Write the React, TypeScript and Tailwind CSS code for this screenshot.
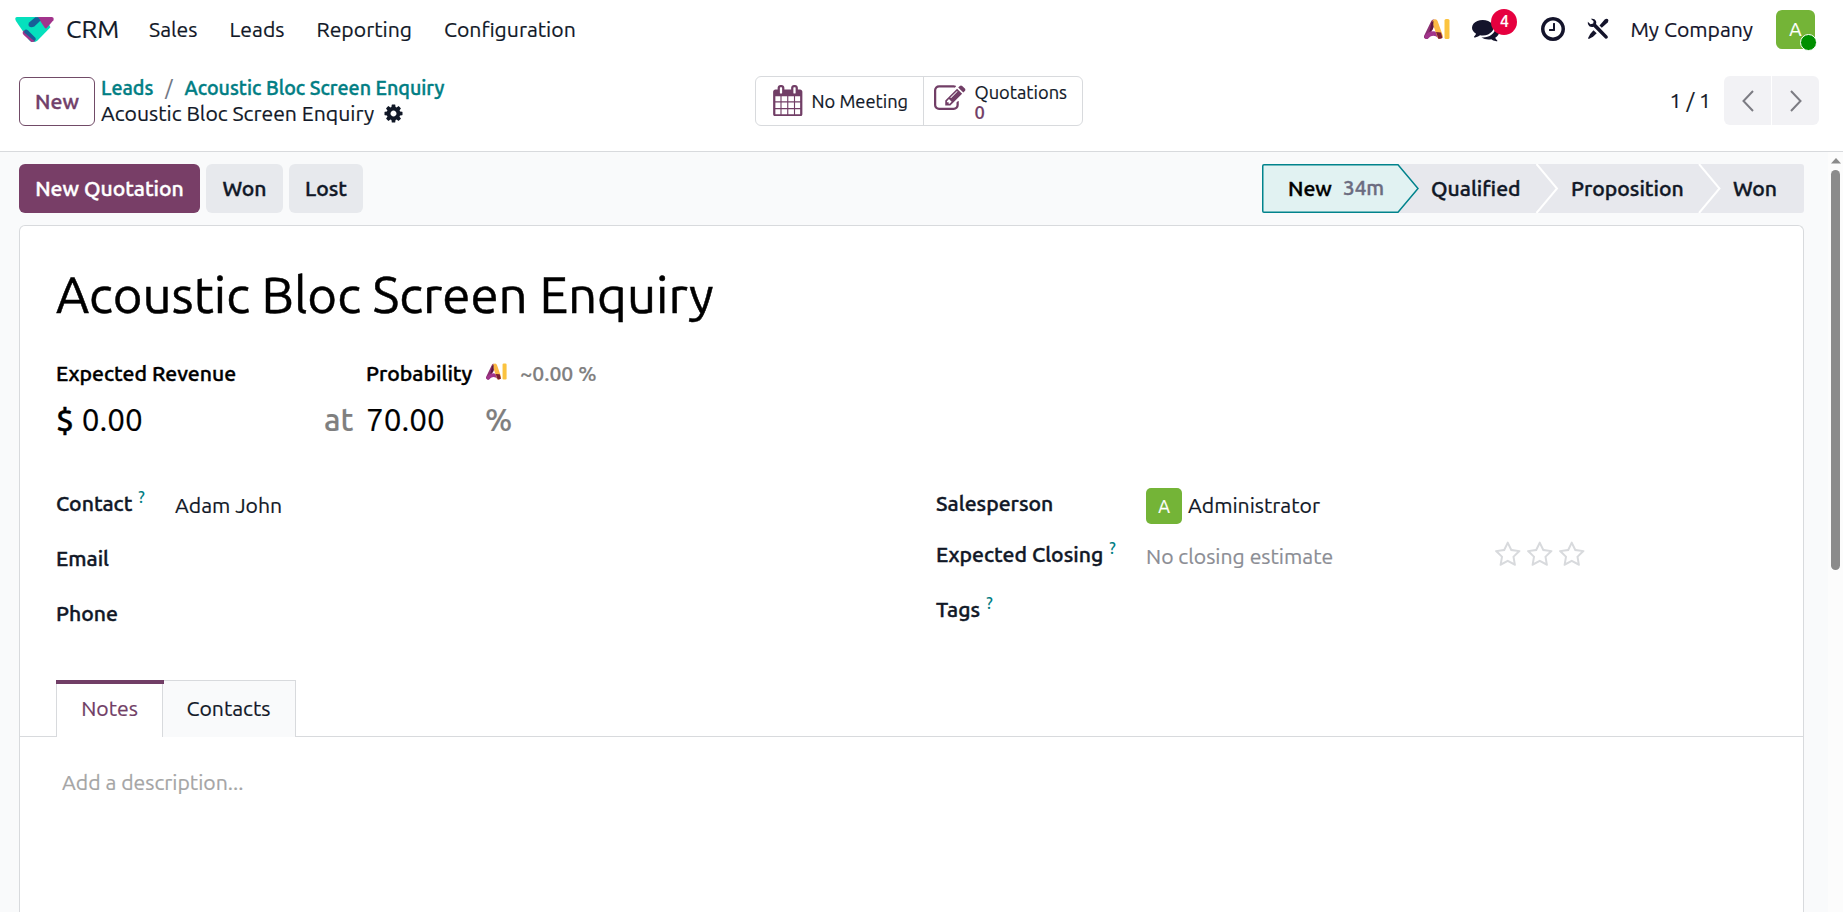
import type { ReactNode } from 'react';

const icons = {
  cog: 'M1152 896q0-106-75-181t-181-75-181 75-75 181 75 181 181 75 181-75 75-181zm512-109v222q0 12-8 23t-20 13l-185 28q-19 54-39 91 35 50 107 138 10 12 10 25t-9 23q-27 37-99 108t-94 71q-12 0-26-9l-138-108q-44 23-91 38-16 136-29 186-7 28-36 28h-222q-14 0-24.5-8.5t-11.5-21.5l-28-184q-49-16-90-37l-141 107q-10 9-25 9-14 0-25-11-126-114-165-168-7-10-7-23 0-12 8-23 15-21 51-66.5t54-70.5q-27-50-41-99l-183-27q-13-2-21-12.5t-8-23.5v-222q0-12 8-23t19-13l186-28q14-46 39-92-40-57-107-138-10-12-10-24 0-10 9-23 26-36 98.5-107.5t94.5-71.5q13 0 26 10l138 107q44-23 91-38 16-136 29-186 7-28 36-28h222q14 0 24.5 8.5t11.5 21.5l28 184q49 16 90 37l142-107q9-9 24-9 13 0 25 10 129 119 165 170 7 8 7 22 0 12-8 23-15 21-51 66.5t-54 70.5q26 50 41 98l183 28q13 2 21 12.5t8 23.5z',
  comments: 'M1408 768q0 139-94 257t-256.5 186.5-353.5 68.5q-86 0-176-16-124 88-278 128-36 9-86 16h-3q-11 0-20.5-8t-11.5-21q-1-3-1-6.5t.5-6.5 2-6l2.5-5 3.5-5.5 4-5 4.5-5 4-4.5q5-6 23-25t26-29.5 22.5-29 25-38.5 20.5-44q-124-72-195-177t-71-224q0-139 94-257t256.5-186.5 353.5-68.5 353.5 68.5 256.5 186.5 94 257zm384 256q0 120-71 224.5t-195 176.5q10 24 20.5 44t25 38.5 22.5 29 26 29.5 23 25q1 1 4 4.5t4.5 5 4 5 3.5 5.5l2.5 5 2 6 .5 6.5-1 6.5q-3 14-13 22t-22 7q-50-7-86-16-154-40-278-128-90 16-176 16-271 0-472-132 58 4 88 4 161 0 309-45t264-129q125-92 192-212t67-254q0-77-23-152 129 71 204 178t75 230z',
  clock: 'M1024 544v448q0 14-9 23t-23 9h-320q-14 0-23-9t-9-23v-64q0-14 9-23t23-9h224v-352q0-14 9-23t23-9h64q14 0 23 9t9 23zm416 352q0-148-73-273t-198-198-273-73-273 73-198 198-73 273 73 273 198 198 273 73 273-73 198-198 73-273zm224 0q0 209-103 385.5t-279.5 279.5-385.5 103-385.5-103-279.5-279.5-103-385.5 103-385.5 279.5-279.5 385.5-103 385.5 103 279.5 279.5 103 385.5z',
  star: 'M1201 1004l306-297-422-62-189-382-189 382-422 62 306 297-73 421 378-199 377 199zm527-357q0 22-26 48l-363 354 86 500q1 7 1 20 0 50-41 50-19 0-40-12l-449-236-449 236q-22 12-40 12-21 0-31.5-14.5t-10.5-35.5q0-6 2-20l86-500-364-354q-25-27-25-48 0-37 56-46l502-73 225-455q19-41 49-41t49 41l225 455 502 73q56 9 56 46z',
  edit: 'M888 1184l116-116-152-152-116 116v56h96v96h56zm440-720q-16-16-33 1l-350 350q-17 17-1 33t33-1l350-350q17-17 1-33zm80 594v190q0 119-84.5 203.5t-203.5 84.5h-832q-119 0-203.5-84.5t-84.5-203.5v-832q0-119 84.5-203.5t203.5-84.5h832q63 0 117 25 15 7 18 23 3 17-9 29l-49 49q-14 14-32 8-23-6-45-6h-832q-66 0-113 47t-47 113v832q0 66 47 113t113 47h832q66 0 113-47t47-113v-126q0-13 9-22l64-64q15-15 35-7t20 29zm-96-738l288 288-672 672h-288v-288zm444 132l-92 92-288-288 92-92q28-28 68-28t68 28l152 152q28 28 28 68t-28 68z',
  calendar: 'M192 1664h288v-288h-288v288zm352 0h320v-288h-320v288zm-352-352h288v-320h-288v320zm352 0h320v-320h-320v320zm-352-384h288v-288h-288v288zm736 736h320v-288h-320v288zm-384-736h320v-288h-320v288zm768 736h288v-288h-288v288zm-384-352h320v-320h-320v320zm-352-864v-288q0-13-9.5-22.5t-22.5-9.5h-64q-13 0-22.5 9.5t-9.5 22.5v288q0 13 9.5 22.5t22.5 9.5h64q13 0 22.5-9.5t9.5-22.5zm736 864h288v-320h-288v320zm-384-384h320v-288h-320v288zm384 0h288v-288h-288v288zm32-480v-288q0-13-9.5-22.5t-22.5-9.5h-64q-13 0-22.5 9.5t-9.5 22.5v288q0 13 9.5 22.5t22.5 9.5h64q13 0 22.5-9.5t9.5-22.5zm384-64v1280q0 52-38 90t-90 38h-1408q-52 0-90-38t-38-90v-1280q0-52 38-90t90-38h128v-96q0-66 47-113t113-47h64q66 0 113 47t47 113v96h384v-96q0-66 47-113t113-47h64q66 0 113 47t47 113v96h128q52 0 90 38t38 90z',
};

function Icon({ name, size, className = '' }: { name: keyof typeof icons; size: number; className?: string }) {
  return (
    <svg width={size} height={size} viewBox="0 0 1792 1792" fill="currentColor" className={`shrink-0 ${className}`}>
      <path d={icons[name]} />
    </svg>
  );
}

function CrmLogo() {
  return (
    <svg width="39" height="25" viewBox="15 21 117 76" className="shrink-0">
      <path d="M20 21H105L122 52L82 93Q76 97 72 97H66Q60 95 56 90L17 33Q12 22 20 21Z" fill="#05e0bd" />
      <path d="M83 21H126Q134 22 131 31L110 55Q107 57 104 53Z" fill="#a2348c" />
      <path d="M38 66Q40 60 48 63L76 93Q73 97 66 97H64L40 75Q36 70 38 66Z" fill="#a2348c" />
      <path d="M43 61Q48 57 54 62L76 84Q80 90 73 94L42 68Z" fill="#175f97" />
      <path d="M76 22H84L92 32L73 50Q62 55 56 48Q53 42 58 37Z" fill="#175f97" />
    </svg>
  );
}

function AiMark({ width, height }: { width: number; height: number }) {
  return (
    <svg width={width} height={height} viewBox="0 0 26 20" className="shrink-0">
      <path d="M9.500 3L2.500 17.500" stroke="#8b2f72" strokeWidth="5" strokeLinecap="round" />
      <path d="M3 17.500Q9 11.500 16 17.500" fill="none" stroke="#a2348c" strokeWidth="4.500" strokeLinecap="round" />
      <path d="M11 3L16 17" stroke="#fbb945" strokeWidth="5.500" strokeLinecap="round" />
      <path d="M7.500 3L9.500 2L9 10L5.500 13Z" fill="#5b1740" />
      <path d="M12 13L17 13.500L18.500 19L14.500 20Z" fill="#7a1f35" />
      <rect x="20.500" y="0" width="5" height="20" rx="1.500" fill="#fbc33f" />
    </svg>
  );
}

function Tools() {
  return (
    <svg width="22" height="22" viewBox="0 0 22 22" className="shrink-0" fill="#14142b">
      <path d="M3.800 0.800Q7.500 0 9 3Q9.600 4.800 9 6L20.500 18Q21.500 19.200 20.300 20.300Q19.200 21.200 18 20.200L6.500 8.700Q4.500 9.500 2.300 8.200Q0.300 6.700 0.800 3.700L3.500 6.200L6.200 5.400L6.600 3.200Z" />
      <path d="M12.500 7.500L17.700 1.600Q19.500 0 21 1.300Q22 2.700 20.700 4.400L14.800 9.700Z" />
      <path d="M6.500 12.200L9.700 15.200L6 18.800L1.800 21L1 20.200L3.200 16Z" />
    </svg>
  );
}

function Chevron({ d }: { d: string }) {
  return (
    <svg width="12" height="22" viewBox="0 0 12 22" fill="none" stroke="#7c7c83" strokeWidth="2">
      <path d={d} />
    </svg>
  );
}

function Label({ children, help }: { children: ReactNode; help?: boolean }) {
  return (
    <div className="flex font-medium leading-[32px] whitespace-nowrap [-webkit-text-stroke:0.4px]">
      {children}
      {help && <span className="ml-[6px] -mt-[6px] h-6 text-[15.75px] text-[#017e84] [-webkit-text-stroke:0]">?</span>}
    </div>
  );
}

const menu = ['Sales', 'Leads', 'Reporting', 'Configuration'];

export default function App() {
  return (
    <div className="flex h-[912px] w-full flex-col overflow-hidden bg-white font-['Ubuntu','Noto_Sans',sans-serif] text-[21.2px] leading-[32px] text-[#111827] [-webkit-text-stroke:0.2px]">
      <header className="flex h-[60px] shrink-0 items-center pb-[2px] pl-[15px] pr-[28px]">
        <CrmLogo />
        <span className="ml-3 text-[25.2px]">CRM</span>
        <nav className="ml-[30px] flex gap-8">
          {menu.map(m => <a key={m} href="#">{m}</a>)}
        </nav>
        <div className="ml-auto flex items-center text-[#14142b]">
          <AiMark width={26} height={20} />
          <div className="relative ml-[22px] flex h-[27px] w-[27px]">
            <Icon name="comments" size={27.3} />
            <span className="absolute -top-[7px] left-[19px] flex h-[26px] w-[26px] items-center justify-center rounded-full bg-[#e6003f] pb-[2px] text-[15.75px] font-medium text-white">4</span>
          </div>
          <Icon name="clock" size={28} className="ml-[40px]" />
          <span className="ml-5"><Tools /></span>
          <span className="ml-[21px]">My Company</span>
          <div className="relative ml-[23px] flex h-[39px] w-[39px] items-center justify-center rounded-[6px] bg-[#74b437] text-[19px] text-white">
            A
            <span className="absolute top-[24px] left-[24px] h-[17px] w-[17px] rounded-full border border-white bg-[#008f00]" />
          </div>
        </div>
      </header>

      <section className="flex h-[92px] shrink-0 border-b border-[#d8dadd] pr-6 pl-[19px] pt-4">
        <div className="flex w-[736px]">
          <button className="mt-px h-[49px] w-[76px] rounded-[6px] border border-[#714b67] pb-[2px] font-medium text-[#71406a] [-webkit-text-stroke:0.4px]">New</button>
          <div className="ml-[6px] -mt-px flex flex-col">
            <div className="flex h-[26px] items-center text-[19.7px] font-medium text-[#017e84] [-webkit-text-stroke:0.4px]">
              <a href="#">Leads</a>
              <span className="mx-3 font-normal text-[#6b7280] [-webkit-text-stroke:0.2px]">/</span>
              <a href="#">Acoustic Bloc Screen Enquiry</a>
            </div>
            <div className="flex h-[24px] items-center">
              Acoustic Bloc Screen Enquiry
              <Icon name="cog" size={21} className="ml-[9px]" />
            </div>
          </div>
        </div>
        <div className="flex h-[50px] rounded-[6px] border border-[#d8dadd] text-[18.3px]">
          <div className="flex w-[168px] items-center border-r border-[#d8dadd] pl-4">
            <Icon name="calendar" size={31.5} className="-mt-px text-[#713e66]" />
            <span className="ml-2">No Meeting</span>
          </div>
          <div className="flex w-[158px] pl-[10px]">
            <Icon name="edit" size={31.5} className="mt-[6px] text-[#713e66]" />
            <div className="ml-[9px] flex flex-col pt-[5px] leading-[20px]">
              <span>Quotations</span>
              <span className="font-medium text-[#713e66]">0</span>
            </div>
          </div>
        </div>
        <div className="ml-auto flex h-[49px] items-center">
          <span className="mr-[13px] -mt-px">1 / 1</span>
          <div className="flex gap-px">
            <button className="flex h-[49px] w-[47px] items-center justify-center rounded-l-[6px] bg-[#f2f2f5]"><Chevron d="M11 1L1.500 11L11 21" /></button>
            <button className="flex h-[49px] w-[47px] items-center justify-center rounded-r-[6px] bg-[#f2f2f5]"><Chevron d="M1 1L10.500 11L1 21" /></button>
          </div>
        </div>
      </section>

      <main className="flex min-h-0 flex-1 bg-[#f9fafb]">
        <div className="flex flex-1 flex-col pt-3 pr-6 pl-[19px]">
          <div className="flex h-[49px] shrink-0 gap-[6px] font-medium [-webkit-text-stroke:0.4px]">
            <button className="w-[181px] rounded-[6px] bg-[#783e67] pb-[2px] text-white">New Quotation</button>
            <button className="w-[77px] rounded-[6px] bg-[#e7e9ed] pb-[2px]">Won</button>
            <button className="w-[74px] rounded-[6px] bg-[#e7e9ed] pb-[2px]">Lost</button>
            <div className="relative ml-auto h-[49px] w-[542px]">
              <svg width="542" height="49" className="absolute inset-0">
                <rect width="542" height="49" rx="3" fill="#e7e8ed" />
                <path d="M274.500 0L295 24.500L274.500 49M437 0L457.500 24.500L437 49" fill="none" stroke="#fff" strokeWidth="2" />
                <path d="M2 .75H136L156 24.500L136 48.250H2Q.75 48.250 .75 47V2Q.75 .75 2 .75Z" fill="#e1f2f2" stroke="#01838c" strokeWidth="1.500" />
              </svg>
              <div className="relative flex h-full items-center pb-[2px] pl-[26px]">
                <span className="w-[55px] text-black">New</span>
                <span className="w-[88px] text-[20.7px] text-[#6b6c80]">34m</span>
                <span className="w-[140px]">Qualified</span>
                <span className="w-[162px]">Proposition</span>
                <span>Won</span>
              </div>
            </div>
          </div>

          <div className="mt-3 flex flex-1 flex-col rounded-t-[6px] border border-b-0 border-[#d8dadd] bg-white pt-[30px]">
            <h1 className="h-[76px] pl-9 text-[51px] leading-[76px] text-black [-webkit-text-stroke:0.5px]">Acoustic Bloc Screen Enquiry</h1>
            <div className="mt-[25px] flex pl-9 text-black">
              <div className="w-[268px]">
                <div className="font-medium [-webkit-text-stroke:0.4px]">Expected Revenue</div>
                <div className="mt-[11px] flex h-[40px] items-center text-[31.5px]"><span className="mr-2 font-medium [-webkit-text-stroke:0.4px]">$</span>0.00</div>
              </div>
              <div className="mt-[43px] flex h-[40px] w-[42px] items-center text-[31.5px] font-medium text-[#7f7f7f]">at</div>
              <div>
                <div className="flex">
                  <span className="font-medium [-webkit-text-stroke:0.4px]">Probability</span>
                  <span className="ml-[14px] mt-[6px]"><AiMark width={21} height={17} /></span>
                  <span className="ml-[13px] font-medium text-[#808080]">~0.00 %</span>
                </div>
                <div className="mt-[11px] flex h-[40px] items-center text-[31.5px]">
                  <span className="w-[119px]">70.00</span>
                  <span className="font-medium text-[#7f7f7f]">%</span>
                </div>
              </div>
            </div>

            <div className="mt-[39px] flex h-[201px] pl-9">
              <div className="flex w-[880px]">
                <div className="flex w-[119px] flex-col gap-[23px] pt-2">
                  <Label help>Contact</Label>
                  <Label>Email</Label>
                  <Label>Phone</Label>
                </div>
                <div className="pt-[10px]">Adam John</div>
              </div>
              <div className="flex w-[210px] flex-col pt-2">
                <Label>Salesperson</Label>
                <div className="mt-[19px] mb-[23px]"><Label help>Expected Closing</Label></div>
                <Label help>Tags</Label>
              </div>
              <div className="w-[348px] pt-2">
                <div className="flex h-[36px] items-center">
                  <span className="mt-px flex h-9 w-9 items-center justify-center rounded-[5px] bg-[#74b437] text-[18px] text-white">A</span>
                  <span className="ml-[6px]">Administrator</span>
                </div>
                <div className="mt-[17px] text-[#8b8d94]">No closing estimate</div>
              </div>
              <div className="flex gap-[4.500px] pt-[62px] text-[#d8dadd]">
                <Icon name="star" size={27.5} />
                <Icon name="star" size={27.5} />
                <Icon name="star" size={27.5} />
              </div>
            </div>

            <div className="flex h-[57px] shrink-0">
              <div className="w-9 border-b border-[#d8dadd]" />
              <div className="relative w-[107px] border-x border-[#d8dadd] pt-3 text-center text-[#713e66]">
                <span className="absolute -left-px top-0 h-1 w-[108px] bg-[#713e66]" />
                Notes
              </div>
              <div className="w-[133px] border-t border-r border-[#d8dadd] bg-[#f9fafb] pt-[11px] pr-px text-center text-[#111827]">Contacts</div>
              <div className="flex-1 border-b border-[#d8dadd]" />
            </div>
            <div className="pt-[29px] pl-[42px] text-[#a5a5a5]">Add a description...</div>
          </div>
        </div>

        <div className="flex w-[15px] flex-col items-center bg-[#fcfcfc] pt-[6px]">
          <svg width="10" height="6" viewBox="0 0 10 6"><path d="M5 0L10 5.500H0Z" fill="#8b8b8b" /></svg>
          <div className="mt-[6px] h-[400px] w-[9px] rounded-full bg-[#8b8b8b]" />
        </div>
      </main>
    </div>
  );
}
